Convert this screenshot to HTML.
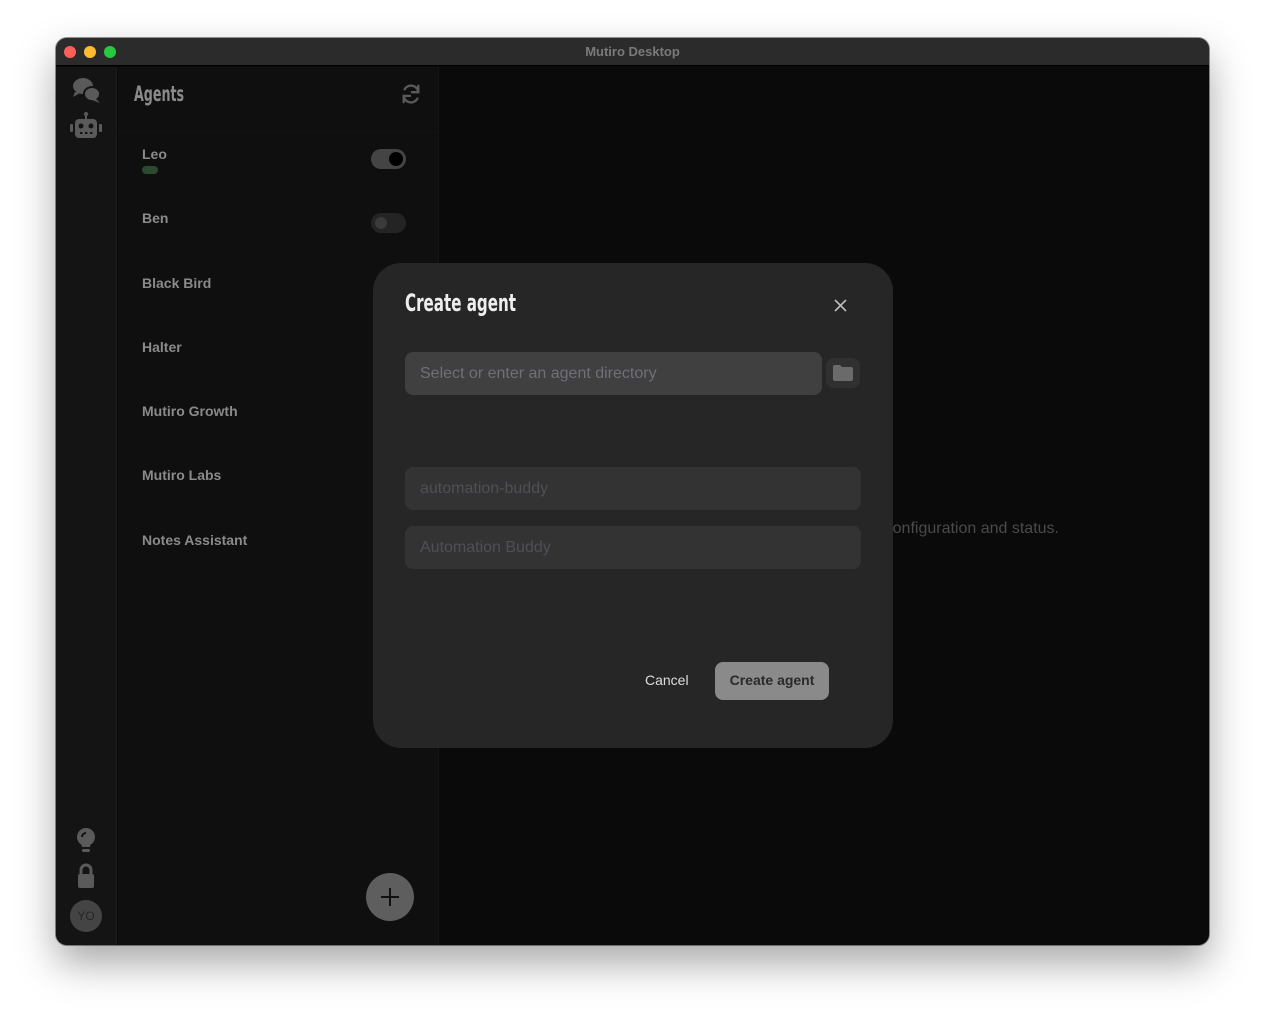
<!DOCTYPE html>
<html><head><meta charset="utf-8"><style>
*{box-sizing:border-box;margin:0;padding:0}
body{width:1265px;height:1019px;background:#fff;position:relative;overflow:hidden;font-family:"Liberation Sans",sans-serif}
.win{position:absolute;left:56px;top:38px;width:1153px;height:907px;border-radius:11px;overflow:hidden;background:#0a0a0a;box-shadow:0 18px 40px rgba(0,0,0,.35),0 0 0 1px rgba(0,0,0,.4)}
.title{position:absolute;left:0;top:0;width:100%;height:28px;background:#2b2b2b;border-bottom:1px solid #000;text-align:center;color:#7a7a7a;font-weight:bold;font-size:13px;line-height:27px}
.dot{position:absolute;top:8px;width:12px;height:12px;border-radius:50%}
.rail{position:absolute;left:0;top:29px;width:61px;bottom:0;background:#141414;border-right:1px solid #1b1b1b}
.list{position:absolute;left:62px;top:29px;width:321px;bottom:0;background:#0f0f0f;border-right:1px solid #151515}
.hdr{position:absolute;left:16px;top:15px;font-family:"Liberation Sans Narrow","DejaVu Sans Condensed",sans-serif;font-weight:bold;font-size:21px;color:#8a8a8a;transform:scaleX(.67);transform-origin:left}
.item{position:absolute;left:24px;font-size:14px;color:#8a8a8a;font-weight:bold}
.tog{position:absolute;left:253px;width:35px;height:20px;border-radius:10px;background:#242424}
.main{position:absolute;left:384px;top:29px;right:0;bottom:0;background:#0a0a0a}
.modal{position:absolute;left:373px;top:263px;width:520px;height:485px;border-radius:28px;background:#262626}
.inp{position:absolute;border-radius:8px;font-size:16px;padding-left:15px;line-height:43px}
</style></head><body>
<div class="win">
 <div class="title">Mutiro Desktop
  <div class="dot" style="left:8px;background:#fe5f57"></div>
  <div class="dot" style="left:28px;background:#febc2e"></div>
  <div class="dot" style="left:48px;background:#28c840"></div>
 </div>
 <div class="rail">
  <svg style="position:absolute;left:16px;top:10px" width="30" height="28" viewBox="0 0 30 28"><ellipse cx="11" cy="9" rx="10" ry="8" fill="#5a5a5a"/><path d="M3 15 L1 20 L8 16Z" fill="#5a5a5a"/><ellipse cx="20" cy="17" rx="8" ry="7" fill="#5a5a5a" stroke="#141414" stroke-width="2"/><path d="M24 22 L28 26 L20 23Z" fill="#5a5a5a"/></svg>
  <svg style="position:absolute;left:14px;top:44px" width="32" height="28" viewBox="0 0 32 28"><circle cx="16" cy="3" r="2" fill="#5a5a5a"/><rect x="15" y="3" width="2" height="5" fill="#5a5a5a"/><rect x="5" y="8" width="22" height="19" rx="4" fill="#5a5a5a"/><rect x="0" y="13" width="3" height="8" rx="1" fill="#5a5a5a"/><rect x="29" y="13" width="3" height="8" rx="1" fill="#5a5a5a"/><circle cx="11" cy="15" r="2.5" fill="#141414"/><circle cx="21" cy="15" r="2.5" fill="#141414"/><rect x="10" y="21" width="2.5" height="2" fill="#141414"/><rect x="15" y="21" width="2.5" height="2" fill="#141414"/><rect x="20" y="21" width="2.5" height="2" fill="#141414"/></svg>
  <svg style="position:absolute;left:20px;top:761px" width="20" height="26" viewBox="0 0 20 26"><circle cx="10" cy="9" r="9" fill="#5a5a5a"/><path d="M5 14 L15 14 L14 19 L6 19Z" fill="#5a5a5a"/><rect x="6" y="21" width="8" height="3" rx="1.5" fill="#5a5a5a"/><path d="M6 9 A4 4 0 0 1 10 5" stroke="#141414" stroke-width="2" fill="none"/></svg>
  <svg style="position:absolute;left:20px;top:796px" width="20" height="26" viewBox="0 0 20 26"><path d="M5 11 V7 A5 5 0 0 1 15 7 V11" stroke="#5a5a5a" stroke-width="3" fill="none"/><rect x="2" y="11" width="16" height="14" rx="2" fill="#5a5a5a"/></svg>
  <div style="position:absolute;left:14px;top:833px;width:32px;height:32px;border-radius:50%;background:#444;color:#262626;font-size:12px;text-align:center;line-height:32px">YO</div>
 </div>
 <div class="list">
  <div class="hdr">Agents</div>
  <svg style="position:absolute;left:282px;top:16px" width="22" height="22" viewBox="0 0 24 24" fill="none" stroke="#5a5a5a" stroke-width="2.5" stroke-linecap="round"><path d="M20 10 A8 8 0 0 0 5 7"/><path d="M4 14 A8 8 0 0 0 19 17"/><path d="M20 3 V10 H13"/><path d="M4 21 V14 H11"/></svg>
  <div style="position:absolute;left:0;right:0;top:65px;border-top:1px solid #121212"></div>
  <div class="item" style="top:79px">Leo</div>
  <div style="position:absolute;left:24px;top:99px;width:16px;height:8px;border-radius:4px;background:#2d4a30"></div>
  <div class="tog" style="top:82px;background:#444"><div style="position:absolute;right:3px;top:3px;width:14px;height:14px;border-radius:50%;background:#000"></div></div>
  <div class="item" style="top:143px">Ben</div>
  <div class="tog" style="top:146px"><div style="position:absolute;left:4px;top:4px;width:12px;height:12px;border-radius:50%;background:#3a3a3a"></div></div>
  <div class="item" style="top:208px">Black Bird</div>
  <div class="item" style="top:272px">Halter</div>
  <div class="item" style="top:336px">Mutiro Growth</div>
  <div class="item" style="top:400px">Mutiro Labs</div>
  <div class="item" style="top:465px">Notes Assistant</div>
  <div style="position:absolute;left:248px;top:806px;width:48px;height:48px;border-radius:50%;background:#5e5e5e"><div style="position:absolute;left:15px;top:23px;width:18px;height:2px;background:#111"></div><div style="position:absolute;left:23px;top:15px;width:2px;height:18px;background:#111"></div></div>
 </div>
 <div class="main">
  <div style="position:absolute;right:150px;top:453px;font-size:16px;color:#4a4a4a;white-space:nowrap">Select an agent to view its configuration and status.</div>
 </div>
</div>
<div class="modal">
 <div style="position:absolute;left:32px;top:26px;font-family:'Liberation Sans Narrow','DejaVu Sans Condensed',sans-serif;font-weight:bold;font-size:24px;color:#eee;transform:scaleX(.7);transform-origin:left">Create agent</div>
 <svg style="position:absolute;left:461px;top:36px" width="13" height="13" viewBox="0 0 13 13" stroke="#bbb" stroke-width="1.6"><path d="M1 1L12 12M12 1L1 12"/></svg>
 <div class="inp" style="left:32px;top:89px;width:417px;height:43px;background:#404040;color:#6f6f78">Select or enter an agent directory</div>
 <div style="position:absolute;left:453px;top:95px;width:34px;height:30px;border-radius:8px;background:#303030"><svg style="position:absolute;left:7px;top:7px" width="20" height="16" viewBox="0 0 20 16"><path d="M0 2 Q0 0 2 0 H7 L9 2 H18 Q20 2 20 4 V14 Q20 16 18 16 H2 Q0 16 0 14Z" fill="#6a6a6a"/></svg></div>
 <div class="inp" style="left:32px;top:204px;width:456px;height:43px;background:#333;color:#4f4f55">automation-buddy</div>
 <div class="inp" style="left:32px;top:263px;width:456px;height:43px;background:#333;color:#4f4f55">Automation Buddy</div>
 <div style="position:absolute;left:272px;top:409px;font-size:14px;color:#ddd">Cancel</div>
 <div style="position:absolute;left:342px;top:399px;width:114px;height:38px;border-radius:8px;background:#8a8a8a;color:#2a2a2a;font-size:14px;font-weight:bold;text-align:center;line-height:37px">Create agent</div>
</div>
</body></html>
